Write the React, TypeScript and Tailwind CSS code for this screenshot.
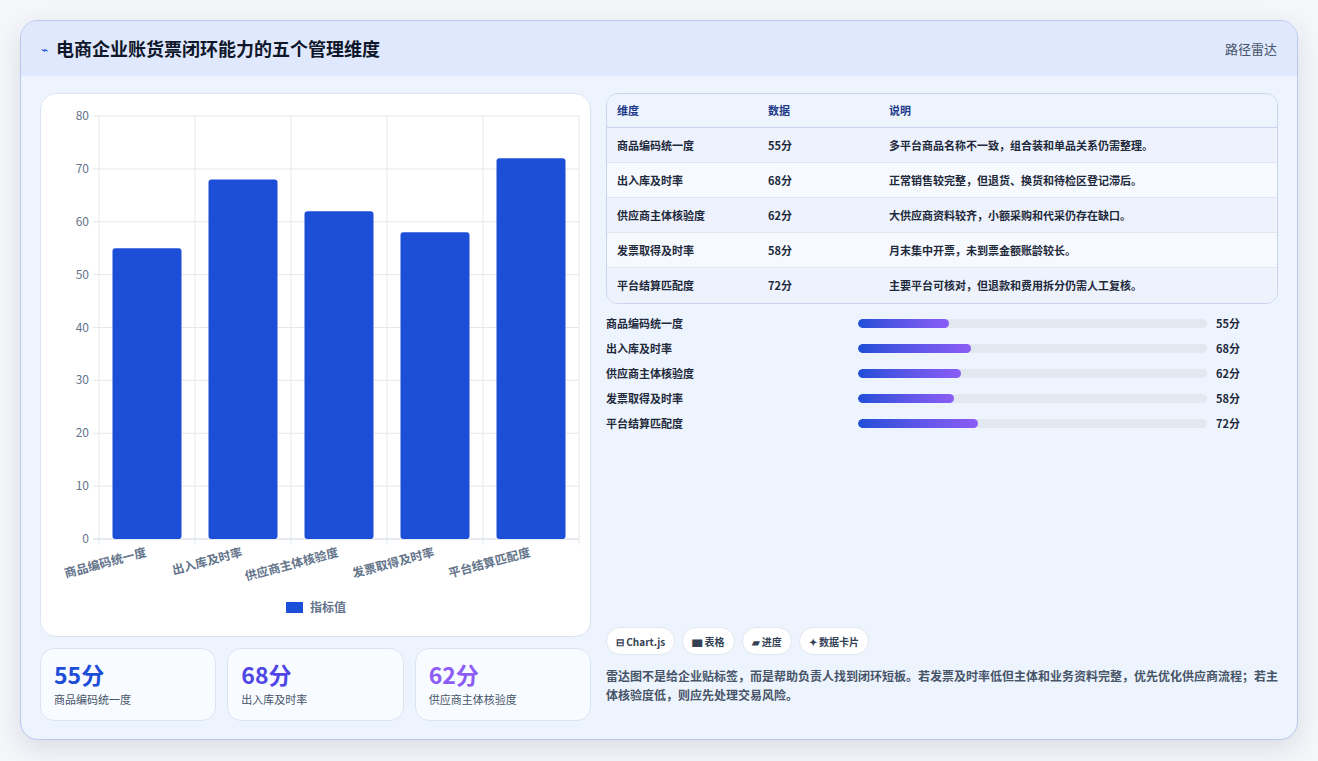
const data = [
  { name: "商品编码统一度", v: 55, d: "多平台商品名称不一致，组合装和单品关系仍需整理。" },
  { name: "出入库及时率", v: 68, d: "正常销售较完整，但退货、换货和待检区登记滞后。" },
  { name: "供应商主体核验度", v: 62, d: "大供应商资料较齐，小额采购和代采仍存在缺口。" },
  { name: "发票取得及时率", v: 58, d: "月末集中开票，未到票金额账龄较长。" },
  { name: "平台结算匹配度", v: 72, d: "主要平台可核对，但退款和费用拆分仍需人工复核。" },
];
const font = { fontFamily: '"Noto Sans CJK SC", "Noto Sans", sans-serif' };

function Chart() {
  const x0 = 58, x1 = 538, y0 = 22, y1 = 445, h = y1 - y0;
  return (
    <svg width="550" height="543" style={font}>
      {[0, 1, 2, 3, 4, 5, 6, 7, 8].map((k) => {
        const y = y1 - (k * 10 / 80) * h;
        return (
          <g key={k}>
            <line x1={x0 - 6} x2={x1} y1={y} y2={y} stroke={k === 0 ? "#cbd5e1" : "#e5e7eb"} />
            <text x={x0 - 10} y={y + 4} textAnchor="end" fontSize="12" fill="#64748b">{k * 10}</text>
          </g>
        );
      })}
      {[0, 1, 2, 3, 4, 5].map((i) => (
        <line key={i} x1={x0 + 96 * i} x2={x0 + 96 * i} y1={y0} y2={y1 + 6} stroke="#e5e7eb" />
      ))}
      {data.map((d, i) => {
        const c = x0 + 48 + 96 * i;
        const bh = (d.v / 80) * h;
        return (
          <g key={i}>
            <rect x={c - 34.5} y={y1 - bh} width="69" height={bh} rx="3" fill="#1d4ed8" />
            <text x={c} y={462} textAnchor="end" fontSize="12" fontWeight="600" fill="#64748b" transform={`rotate(-15 ${c} 462)`}>{d.name}</text>
          </g>
        );
      })}
      <rect x="245" y="508" width="17" height="11" fill="#1d4ed8" />
      <text x="269" y="518" fontSize="12" fontWeight="600" fill="#64748b">指标值</text>
    </svg>
  );
}

export default function App() {
  const statColors = ["text-[#1d4ed8]", "text-[#4f46e5]", "text-[#8b5cf6]"];
  return (
    <div className="w-[1318px] h-[761px] bg-[#f4f6fa] pt-[20px] px-[20px]" style={font}>
      <div className="w-[1278px] h-[720px] rounded-[18px] border border-[#b9c8ef] bg-[#eef4fe] shadow-[0_8px_24px_rgba(30,41,59,0.12)] overflow-hidden flex flex-col">
        <div className="h-[55px] bg-[#dfe8fd] flex items-center justify-between px-[20px] shrink-0">
          <div className="flex items-center gap-[8px]">
            <span className="text-[#1d4ed8] text-[12px]">⌁</span>
            <span className="text-[18px] font-bold text-[#0f172a]">电商企业账货票闭环能力的五个管理维度</span>
          </div>
          <span className="text-[13px] text-[#475569]">路径雷达</span>
        </div>
        <div className="flex gap-[15px] px-[19px] pt-[17px]">
          <div className="w-[551px] flex flex-col gap-[11px]">
            <div className="h-[544px] bg-white rounded-[16px] border border-[#dbe4f3]">
              <Chart />
            </div>
            <div className="grid grid-cols-3 gap-[11px]">
              {data.slice(0, 3).map((d, i) => (
                <div key={i} className="h-[73px] rounded-[14px] border border-[#dbe4f3] bg-[#f8fbff] px-[13px] pt-[10px]">
                  <div className={`text-[23px] font-bold leading-[30px] ${statColors[i]}`}>{d.v}分</div>
                  <div className="text-[11px] text-[#475569] mt-[2px]">{d.name}</div>
                </div>
              ))}
            </div>
          </div>
          <div className="flex-1 flex flex-col">
            <div className="rounded-[12px] border border-[#c9d5ee] overflow-hidden text-[11px]">
              <div className="h-[34px] flex items-center bg-[#eef4fe] text-[#1e3a8a] font-semibold border-b border-[#c9d5ee]">
                <div className="w-[161px] pl-[10px]">维度</div>
                <div className="w-[121px]">数据</div>
                <div>说明</div>
              </div>
              {data.map((d, i) => (
                <div key={i} className={`h-[35px] flex items-center font-semibold text-[#1e293b] ${i % 2 === 0 ? "bg-[#edf2fd]" : "bg-[#f6f9fe]"} ${i < 4 ? "border-b border-[#dfe6f3]" : ""}`}>
                  <div className="w-[161px] pl-[10px]">{d.name}</div>
                  <div className="w-[121px]">{d.v}分</div>
                  <div>{d.d}</div>
                </div>
              ))}
            </div>
            <div className="flex flex-col gap-[13px] mt-[13px]">
              {data.map((d, i) => (
                <div key={i} className="flex items-center h-[12px] text-[11px] font-semibold text-[#1e293b]">
                  <div className="w-[252px]">{d.name}</div>
                  <div className="w-[349px] h-[9px] rounded-full bg-[#e2e8f0] overflow-hidden">
                    <div className="h-full rounded-full bg-gradient-to-r from-[#1d4ed8] to-[#8b5cf6]" style={{ width: `${(d.v / 210) * 100}%` }} />
                  </div>
                  <div className="ml-[9px]">{d.v}分</div>
                </div>
              ))}
            </div>
            <div className="flex-1" />
            <div className="flex gap-[7px] text-[10px] font-semibold text-[#334155]">
              {["⊟ Chart.js", "▆ 表格", "▰ 进度", "✦ 数据卡片"].map((t) => (
                <span key={t} className="h-[28px] px-[9px] flex items-center rounded-full bg-white border border-[#e2e8f0]">{t}</span>
              ))}
            </div>
            <p className="mt-[11px] text-[12px] leading-[19px] text-[#475569] font-semibold pb-[17px]">
              雷达图不是给企业贴标签，而是帮助负责人找到闭环短板。若发票及时率低但主体和业务资料完整，优先优化供应商流程；若主体核验度低，则应先处理交易风险。
            </p>
          </div>
        </div>
      </div>
    </div>
  );
}
